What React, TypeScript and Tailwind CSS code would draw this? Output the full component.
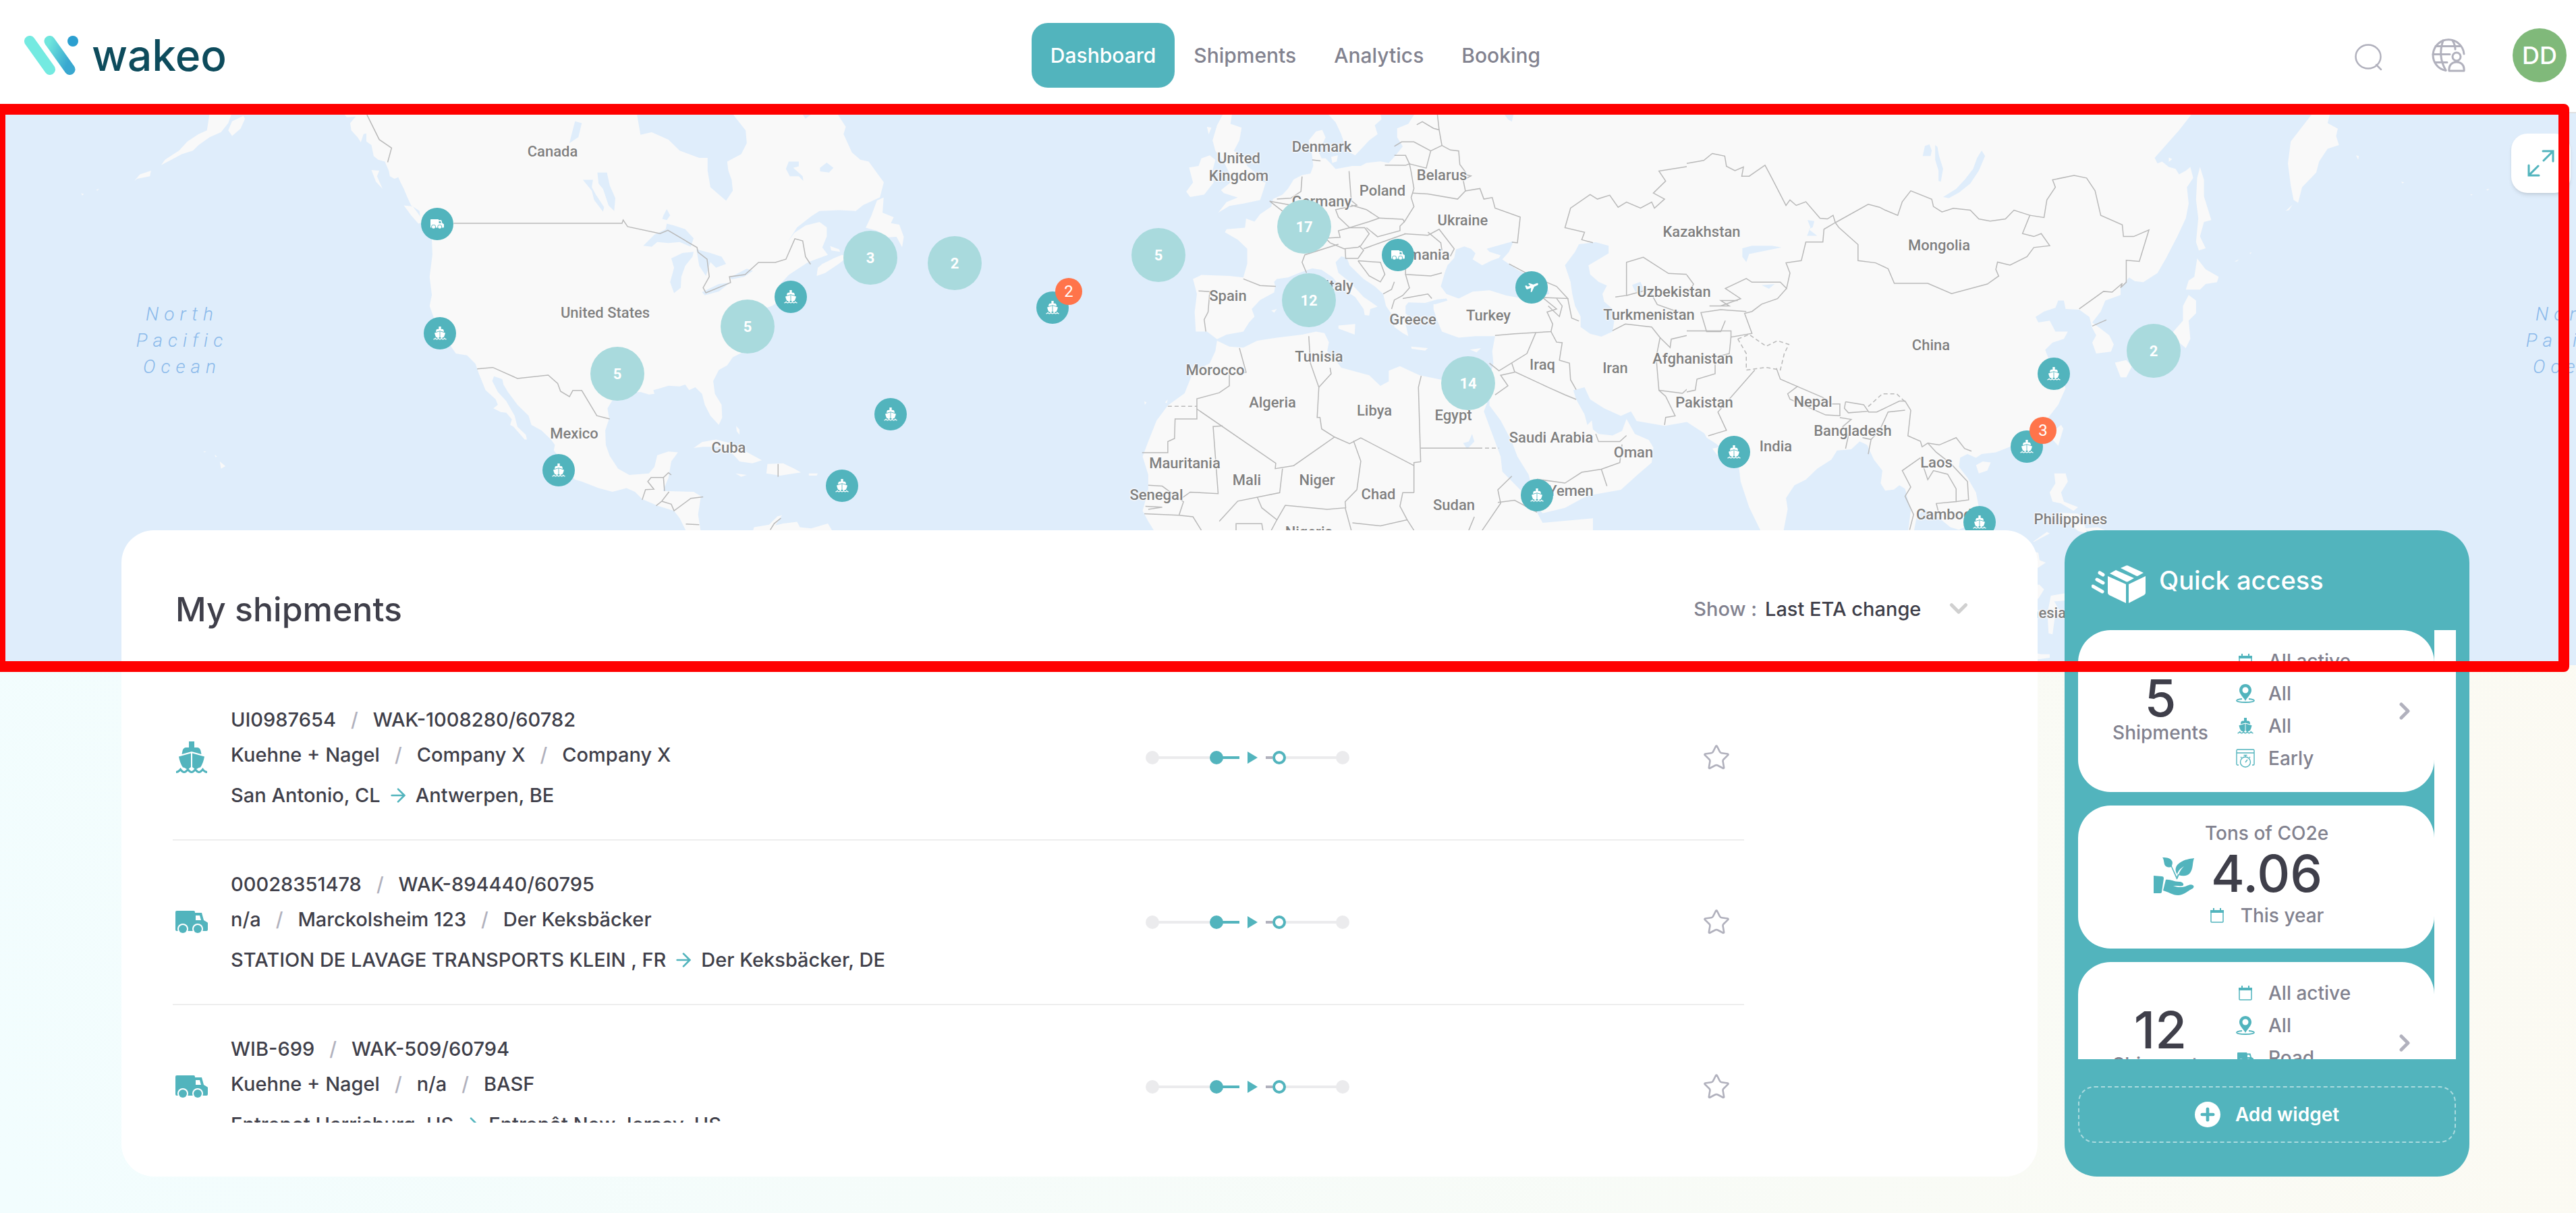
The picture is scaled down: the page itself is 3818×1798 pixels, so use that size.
import { ArrowRight, ChevronDown, ChevronRight, Plus, Star } from 'lucide-react';

type Mode = 'ship' | 'truck' | 'plane';

type Tile = {
  x: number;
  y: number;
  w: number;
  h: number;
  land: string[];
  water: string[];
  borders: string[];
  dashed: string[];
};

// World map outline, one entry per tile, points on a 1568 x 1568 grid
const tiles: Tile[] = [
  {
    x: 0,
    y: 150,
    w: 1300,
    h: 850,
    land: [
      '612,30 620,44 636,42 626,60 628,80 640,100 645,112 650,90 655,88 655,110 664,120 668,150 676,160 688,165 695,190 697,205 705,212 712,208 716,222 722,240 728,262 735,285 742,292 750,300 752,330 772,375 773,420 768,480 772,530 768,560 775,590 778,620 790,640 805,668 815,690 835,695 850,718 856,745 868,790 886,815 890,830 882,840 895,850 905,852 915,870 912,885 918,890 938,925 942,925 940,912 935,905 925,890 920,860 905,820 890,795 880,765 883,752 898,760 900,775 908,795 925,830 945,860 950,885 968,900 985,925 992,940 990,955 998,970 1010,1000 1028,1035 1040,1040 1070,1058 1095,1068 1120,1058 1135,1068 1148,1088 1175,1106 1205,1120 1215,1140 1228,1180 1253,1180 1248,1130 1253,1080 1240,1068 1185,1066 1195,1030 1200,985 1212,960 1195,958 1175,968 1170,1000 1160,1018 1125,1022 1105,1005 1090,970 1083,940 1082,900 1089,868 1086,840 1098,810 1120,798 1145,795 1160,802 1170,800 1168,790 1180,785 1195,778 1215,780 1225,775 1232,790 1243,782 1255,800 1260,830 1270,860 1285,885 1291,865 1290,830 1278,800 1275,765 1285,735 1300,722 1310,700 1330,685 1345,660 1340,620 1360,570 1380,560 1400,540 1395,500 1410,475 1425,460 1445,440 1480,420 1470,400 1478,370 1478,345 1465,330 1440,340 1420,360 1408,385 1425,345 1450,315 1465,300 1500,298 1530,300 1543,284 1573,263 1580,222 1560,180 1553,165 1538,160 1523,140 1508,90 1512,70 1495,30 1455,30 1440,48 1432,30 1308,30 1315,45 1333,80 1335,115 1325,145 1300,165 1302,190 1308,215 1310,245 1298,272 1285,255 1270,235 1265,190 1265,155 1250,155 1215,135 1195,105 1165,85 1145,92 1138,30',
      '722,285 738,288 748,308 757,330 748,335 735,312',
      '664,188 678,190 674,205 684,240 672,220',
      '375,30 415,30 408,60 395,85 375,98 355,120 345,135 325,145 300,165 288,175 295,160 320,135 335,110 355,90 370,80',
      '415,55 435,40 438,48 430,75 415,95 408,80',
      '240,218 250,200 270,190 268,205 245,212',
      '145,252 150,254 147,258',
      '172,242 177,240 174,245',
      '1240,948 1255,932 1280,925 1305,935 1330,955 1362,982 1345,990 1322,985 1310,965 1285,945 1258,945',
      '1372,992 1400,990 1420,1005 1432,1015 1410,1020 1395,1024 1370,1018',
      '1315,1018 1335,1022 1325,1027',
      '1446,1018 1462,1018 1460,1024 1446,1024',
      '1316,888 1322,898 1322,912 1317,902',
      '1345,1180 1348,1165 1375,1158 1390,1135 1398,1132 1386,1160 1400,1155 1425,1150 1430,1165 1450,1168 1480,1155 1490,1180',
      '393,985 403,998 395,1005',
      '384,966 388,972 385,973',
      '364,957 369,959 365,960',
      '1460,478 1462,455 1470,445 1490,430 1505,420 1515,426 1500,444 1475,470',
      '1484,396 1500,405 1502,412 1486,408',
    ],
    water: [
      '1150,395 1170,365 1190,350 1192,335 1205,340 1225,350 1240,375 1235,398 1215,385 1195,388 1175,385 1165,398',
      '1200,430 1220,415 1240,412 1238,425 1225,450 1218,480 1217,510 1205,525 1198,495 1205,455',
      '1245,405 1270,415 1290,425 1298,445 1280,455 1270,440 1262,478 1250,450',
      '1255,522 1285,500 1305,496 1285,520 1260,531',
      '1305,482 1335,458 1346,464 1330,480 1308,487',
      '1068,195 1085,195 1090,230 1100,265 1098,300 1088,285 1078,240 1070,225',
      '1042,215 1060,215 1058,235 1065,255 1080,290 1078,302 1062,270 1058,245',
      '1186,312 1192,295 1198,312 1192,325 1184,322',
      '1410,165 1428,165 1428,178 1418,182 1435,205 1436,218 1428,205 1412,205 1405,185',
      '1466,182 1478,168 1490,182 1482,195 1466,192',
      '1028,55 1040,60 1034,98 1018,115 1022,90',
    ],
    borders: [
      '656,37 678,105 700,128 693,167',
      '811,334 1112,334 1114,325 1122,343 1180,362 1194,353 1246,400 1248,413 1264,432 1268,480 1257,510 1262,524 1306,496 1304,480 1332,474 1356,441 1386,441 1405,432 1421,376 1435,382 1440,425 1449,446',
      '853,732 881,728 925,758 980,749 997,772 1002,793 1018,808 1024,791 1040,791 1067,860 1090,869',
      '1148,1090 1154,1062 1169,1061 1158,1040 1164,1029 1186,1029 1195,1016 1200,1022',
      '1186,1029 1188,1066',
      '1196,1068 1183,1094 1173,1106',
      '1183,1094 1200,1102 1205,1120 1235,1086 1257,1082',
      '1226,1156 1250,1158',
      '1391,992 1391,1027',
      '1396,1140 1384,1155 1377,1172',
    ],
    dashed: [],
  },
  {
    x: 1250,
    y: 150,
    w: 1300,
    h: 700,
    land: [
      '60,330 72,320 70,370 90,385 85,405 100,410 108,450 105,485 95,450 80,452 60,430 40,420 50,380',
      '678,45 695,40 692,75 712,88 708,130 698,165 715,185 722,215 735,235 740,262 755,270 750,300 745,328 715,340 690,348 670,370 685,335 705,320 680,305 675,295 692,270 690,240 680,200 665,165 660,130 668,80',
      '640,190 655,180 665,195 660,230 662,270 645,310 620,318 613,300 625,270 618,220 635,215',
      '650,85 658,88 653,110',
      '865,40 880,70 890,110 900,165 915,180 930,150 940,130 955,110 950,80 962,60 960,40',
      '872,185 884,180 882,200 874,205',
      '1022,40 1010,75 990,90 990,120 1000,150 985,185 975,205 960,200 935,205 925,215 910,215 880,225 870,205 862,190 855,190 850,170 862,120 856,95 845,100 832,130 838,180 840,215 835,240 820,245 805,260 795,290 785,310 768,325 765,350 745,375 735,400 720,390 718,420 685,425 682,435 705,460 722,490 722,540 715,585 690,580 640,577 625,590 632,640 628,700 630,765 650,765 668,790 685,775 715,765 725,735 735,715 730,690 745,660 770,635 772,615 770,600 775,590 795,585 815,570 838,555 855,560 875,585 890,620 915,650 930,690 932,710 940,712 942,690 955,682 930,650 915,620 905,600 885,570 880,535 890,515 900,520 905,545 930,590 950,615 965,640 970,680 985,720 985,750 1000,770 1010,780 1005,740 1015,720 1005,705 1005,680 1010,668 1040,670 1055,672 1055,690 1060,720 1070,765 1100,785 1130,780 1165,780 1160,830 1162,870 1155,920 1155,1010 1175,1060 1195,1130 1205,1180 1225,1240 1232,1290 1240,1345 1250,1368 1290,1350 1330,1310 1390,1290 1420,1240 1445,1200 1448,1150 1440,1125 1415,1105 1400,1055 1392,1095 1375,1110 1350,1105 1340,1090 1338,1060 1330,1075 1325,1040 1310,990 1305,960 1325,950 1335,990 1360,1020 1390,1045 1408,1030 1418,1062 1468,1078 1508,1065 1545,1110 1568,1150 1568,40',
      '668,795 690,815 715,818 740,795 775,785 820,775 845,765 860,770 868,800 865,830 880,860 890,885 940,910 960,945 975,930 975,895 995,880 1030,910 1070,925 1110,930 1158,925 1160,960 1150,1005 1145,1030 1165,1130 1175,1180 1178,1230 1210,1290 1240,1365 1250,1400 1340,1385 1340,1440 560,1440 545,1395 535,1360 545,1290 545,1240 535,1180 545,1130 560,1060 580,1010 610,970 625,900 655,870 665,830',
      '885,745 915,740 914,775 885,755',
      '1015,815 1045,820 1040,828 1016,822',
      '1120,825 1140,820 1132,834',
      '765,695 775,690 770,702',
      '538,996 542,1000 539,1008',
      '575,1000 580,990 578,1003',
    ],
    water: [
      '1078,640 1068,615 1075,570 1080,545 1092,520 1095,492 1110,482 1122,490 1130,505 1125,525 1142,545 1158,530 1172,520 1175,512 1155,500 1150,490 1172,478 1198,465 1190,500 1178,525 1205,560 1235,585 1258,610 1262,640 1240,650 1215,655 1185,645 1155,628 1125,632 1100,655',
      '1040,670 1062,658 1078,655 1080,662 1058,674',
      '1290,545 1308,500 1315,475 1345,468 1368,480 1368,505 1350,525 1332,545 1335,575 1350,600 1365,612 1357,640 1360,665 1375,690 1378,730 1375,765 1355,782 1335,772 1318,750 1318,715 1308,680 1303,640 1300,600',
      '1410,610 1425,600 1430,620 1425,645 1415,630',
      '1182,45 1198,45 1195,68 1188,60',
      '1108,1135 1118,1130 1124,1105 1128,1130 1115,1155',
    ],
    borders: [
      '715,590 745,612 773,615',
      '635,630 655,632 652,700 645,725 648,765',
      '785,365 762,332 800,345',
      '775,325 800,322 818,300 820,250',
      '838,195 853,198',
      '904,232 908,330 918,345 880,360 885,385 905,420 940,400 958,388 935,360 908,345',
      '958,388 1000,392 1003,400 1020,350 1015,320 1020,290 1015,235 1012,208 1005,213 968,212',
      '905,420 885,430 888,452 862,455 870,470 895,490 920,485 925,480 940,440 932,420 905,420',
      '885,475 825,510 820,535 828,570',
      '897,490 898,522 920,522 930,495 922,480',
      '935,420 955,450 995,430 995,415 1003,400',
      '930,490 960,470 1005,440',
      '985,180 1005,180 1012,208 1042,222 1050,165 1020,135 998,135 985,150',
      '1050,165 1070,147 1065,95 1055,90 1035,68 1025,78',
      '1062,45 1065,95',
      '1070,147 1085,162 1100,165 1102,210 1112,235 1105,240 1122,248 1108,262 1112,298 1098,325 1045,308 1018,305',
      '1112,298 1138,290 1145,325 1160,320 1165,355 1210,385 1205,470 1195,468',
      '1003,440 1045,445 1065,425 1092,490 1085,515',
      '1045,435 1068,470 1070,495',
      '1005,545 1005,575 1050,580 1070,570',
      '1005,575 1012,620 1000,645 985,660 980,690',
      '1000,655 1045,640 1052,655',
      '920,530 960,535 968,575 960,600 940,580 920,530',
      '985,600 980,625 965,640',
      '1165,778 1200,772 1265,765 1268,740 1258,700 1275,690 1250,652',
      '1238,768 1222,838 1172,895 1155,870',
      '1265,765 1275,800 1285,802 1280,860 1298,870 1300,925 1310,958',
      '1195,870 1200,898 1260,950 1290,975 1310,990',
      '1200,900 1175,910 1188,945 1165,975',
      '1240,1255 1290,1268 1320,1232 1355,1222 1388,1200 1392,1140',
      '1355,1222 1365,1278',
      '1345,1105 1350,1130 1388,1130 1400,1110',
      '1190,540 1230,580 1275,615 1295,655 1250,652',
      '1275,655 1285,680 1280,715 1260,680',
      '1295,655 1302,720 1315,730',
      '1375,762 1398,740 1445,750 1460,785 1453,850 1458,960 1470,980 1487,1045 1470,1050 1468,1075',
      '1458,960 1500,970 1530,920 1558,905 1558,865',
      '1340,470 1320,460 1325,435 1290,420 1300,355 1335,310 1348,325 1370,312 1385,352 1400,335 1425,355 1445,335 1450,355 1468,325 1448,305 1470,265 1458,232 1515,215 1520,195 1550,190 1555,172 1568,176',
      '1380,650 1400,645 1400,535 1430,518 1475,572 1510,575 1520,600 1545,625',
      '1400,645 1440,625 1455,675 1500,705 1525,760',
      '1460,785 1478,818 1480,790 1508,778 1530,762 1560,765',
      '708,820 720,900 690,905 690,945 672,968 632,988 632,1055 593,1055 592,1120 580,1130 580,1167 534,1167',
      '632,1022 773,1202 772,1220 805,1210 878,1115 855,1088 852,1050 847,1050 850,950 835,870 832,780',
      '850,950 872,905 870,885',
      '878,1115 905,1137 925,1118 1020,1210',
      '1020,1300 1020,1200 1032,1197 1028,950 1033,912',
      '1032,1152 1135,1152',
      '678,1078 661,1080 670,1303 620,1298 605,1318',
      '785,1220 780,1300 705,1328 672,1395',
      '912,1128 925,1195 918,1290 897,1330 898,1350 865,1355 790,1342 775,1390',
      '1020,1300 1000,1300 995,1345 1008,1390 960,1410 910,1400',
      '897,1350 908,1425',
      '1008,1390 1020,1425',
      '545,1275 570,1278 608,1330 600,1375',
      '538,1370 600,1375 625,1380 640,1425',
      '540,1345 570,1348 545,1355',
      '740,1315 748,1350 775,1390 765,1425',
      '702,1425 702,1403 748,1403 750,1425',
      '1195,1245 1170,1290 1175,1335 1142,1425',
      '1170,1332 1200,1325 1240,1365',
      '1128,1380 1118,1425',
    ],
    dashed: ['580,1013 632,1013', '1135,1152 1172,1152'],
  },
  {
    x: 2500,
    y: 150,
    w: 1318,
    h: 850,
    land: [
      '0,30 893,30 868,80 845,120 825,155 830,170 838,165 850,180 862,185 868,200 880,190 888,180 893,210 882,235 885,280 880,320 865,370 845,430 830,470 805,495 790,492 780,482 765,510 765,530 738,545 730,575 715,605 730,622 745,640 753,665 748,685 722,690 715,660 722,640 715,620 710,590 692,570 668,568 665,545 655,545 650,565 630,575 615,590 620,605 640,600 650,630 672,630 665,650 645,660 632,680 642,720 660,750 668,785 655,830 640,860 620,900 600,925 570,945 545,960 520,965 510,975 495,965 482,975 480,1000 495,1030 510,1070 515,1110 510,1150 480,1172 465,1165 445,1140 430,1125 418,1115 405,1140 400,1180 390,1180 395,1120 385,1060 375,1050 365,1062 350,1065 342,1045 345,1010 330,980 318,940 305,930 290,952 265,955 255,980 230,1005 210,1035 190,1050 175,1085 178,1115 170,1180 132,1180 110,1110 95,1040 92,1000 85,990 60,980 45,950 60,945 35,920 25,890 0,875',
      '905,180 912,215 912,260 925,325 912,330 905,370 915,402 903,408 898,385 902,320 898,270 900,210',
      '1105,30 1135,30 1130,60 1148,75 1145,95 1150,120 1130,130 1115,165 1110,195 1085,235 1078,278 1070,270 1065,230 1060,170 1065,110 1085,70',
      '1056,300 1068,283 1062,298',
      '900,430 915,460 938,480 935,495 915,500 905,515 880,515 885,490 895,480',
      '885,530 898,545 898,580 885,600 888,650 880,675 860,650 840,685 800,690 778,705 785,690 830,660 858,630 875,600 875,560',
      '755,715 775,708 785,725 775,755 765,755',
      '648,900 660,885 664,895 655,942 645,925',
      '510,995 522,985 536,988 530,1010 515,1018',
      '648,1018 668,1018 672,1040 660,1070 665,1095 690,1110 682,1120 660,1100 645,1095 640,1070 650,1045',
      '655,1125 690,1128 700,1150 706,1182 690,1175 670,1150',
      '611,1204 635,1178 640,1182 612,1205',
      '700,1168 725,1165 740,1175 715,1182',
      '600,1225 620,1235 622,1255 633,1262 620,1275 600,1300',
      '600,1320 622,1322 630,1335 620,1360 600,1370',
      '642,1352 670,1345 668,1365 648,1368 660,1400 650,1400 645,1458 638,1455 636,1400',
      '600,1505 625,1512 640,1512 640,1522 600,1530',
      '1180,148 1185,150 1184,160',
      '1260,220 1265,222 1262,225',
      '1382,254 1386,255 1383,258',
      '1410,241 1415,240 1412,245',
      '850,154 856,158 850,166',
      '992,415 996,413 994,418',
      '966,438 974,432 970,438',
    ],
    water: [
      '520,135 526,150 515,190 500,225 480,250 462,265 452,262 475,240 490,215 505,185 512,155',
      '420,122 428,118 432,135 430,150 416,150',
      '438,120 442,125 445,150 452,185 448,220 444,218 444,190 438,160',
      '98,402 115,395 150,395 167,400 135,410 110,418 105,440 98,425',
      '213,325 225,328 222,345 215,350 230,368 212,368 218,345',
      '132,503 155,500 145,513',
    ],
    borders: [
      '0,170 30,162 45,143 67,150 70,178 85,190 100,180 97,205 110,205 138,175 150,210 175,285 182,270 193,285 210,275 235,320 248,322 258,312 262,332',
      '262,332 320,282 340,290 350,298 372,312 380,275 395,245 432,268 435,288 450,303 470,293 500,298 515,322 535,328 562,322 577,298 605,312 592,362 612,370 625,362 640,395 612,400 600,425 570,448 548,440 545,460 550,478 530,500 467,526 425,498 366,498 355,458 333,442 302,436 302,392 268,345 262,332',
      '605,312 630,318 635,270 650,235 645,215 683,203 705,210 720,245 730,312 768,338 770,370 788,370 815,352 798,438 775,435 775,495 765,510 768,498 750,522 735,520 692,568',
      '715,615 740,598',
      '262,332 242,350 240,385 210,385 202,436 175,442 182,470 176,512 165,495 115,495 105,485 68,512 95,540 60,560',
      '176,512 160,540 132,555 115,575 102,580 115,635 78,645 78,628 0,628',
      '68,600 60,630 35,630 25,578 60,570 105,575',
      '40,560 75,560 60,545 90,545',
      '0,475 12,500 5,520',
      '120,735 55,850 70,900 38,915',
      '78,645 75,690 50,700 50,745 18,760 15,790 0,795',
      '158,730 165,760 195,780 178,800 182,815 245,858 270,860 270,828 255,828',
      '195,780 240,810 255,828',
      '280,822 312,830 320,848 285,852 278,840 280,822',
      '320,850 335,850 375,820 385,820 395,845 390,915 412,930 415,945 425,935 445,940 475,920 490,950 502,957',
      '270,865 290,870 275,890 285,915 280,950',
      '310,920 325,925 320,965',
      '385,845 355,850 340,900 325,925',
      '412,975 380,1010 395,1055 385,1080 400,1130 393,1172',
      '412,975 425,1035 435,1010 460,1020 475,1060 475,1095 440,1100 445,1130',
      '425,935 440,960 465,990 495,1040 497,1090 475,1095',
    ],
    dashed: [
      '90,650 110,638 140,670 160,655 180,665 172,690 165,735 140,728 105,735 105,690 90,650',
      '320,835 345,800 370,800 385,822',
    ],
  },
];

const labels: { text: string; x: number; y: number }[] = [
  { text: 'Canada', x: 819, y: 225 },
  { text: 'United States', x: 897, y: 464 },
  { text: 'Mexico', x: 851, y: 643 },
  { text: 'Cuba', x: 1080, y: 664 },
  { text: 'Denmark', x: 1959, y: 218 },
  { text: 'United\nKingdom', x: 1836, y: 248 },
  { text: 'Belarus', x: 2137, y: 260 },
  { text: 'Poland', x: 2049, y: 283 },
  { text: 'Germany', x: 1959, y: 299 },
  { text: 'Ukraine', x: 2168, y: 327 },
  { text: 'Romania', x: 2105, y: 378 },
  { text: 'Italy', x: 1985, y: 424 },
  { text: 'Spain', x: 1820, y: 439 },
  { text: 'Greece', x: 2094, y: 474 },
  { text: 'Turkey', x: 2206, y: 468 },
  { text: 'Tunisia', x: 1955, y: 529 },
  { text: 'Morocco', x: 1801, y: 549 },
  { text: 'Algeria', x: 1886, y: 597 },
  { text: 'Libya', x: 2037, y: 609 },
  { text: 'Egypt', x: 2154, y: 616 },
  { text: 'Iraq', x: 2286, y: 541 },
  { text: 'Iran', x: 2394, y: 546 },
  { text: 'Saudi Arabia', x: 2299, y: 649 },
  { text: 'Oman', x: 2421, y: 671 },
  { text: 'Mauritania', x: 1756, y: 687 },
  { text: 'Mali', x: 1848, y: 712 },
  { text: 'Niger', x: 1952, y: 712 },
  { text: 'Senegal', x: 1714, y: 734 },
  { text: 'Chad', x: 2043, y: 733 },
  { text: 'Sudan', x: 2155, y: 749 },
  { text: 'Yemen', x: 2328, y: 728 },
  { text: 'Nigeria', x: 1940, y: 789 },
  { text: 'Kazakhstan', x: 2522, y: 344 },
  { text: 'Uzbekistan', x: 2481, y: 433 },
  { text: 'Turkmenistan', x: 2444, y: 467 },
  { text: 'Afghanistan', x: 2509, y: 532 },
  { text: 'Pakistan', x: 2526, y: 597 },
  { text: 'China', x: 2862, y: 512 },
  { text: 'Mongolia', x: 2874, y: 364 },
  { text: 'Nepal', x: 2687, y: 596 },
  { text: 'Bangladesh', x: 2746, y: 639 },
  { text: 'India', x: 2632, y: 662 },
  { text: 'Laos', x: 2870, y: 686 },
  { text: 'Cambodia', x: 2890, y: 763 },
  { text: 'Philippines', x: 3069, y: 770 },
  { text: 'Indonesia', x: 3014, y: 909 },
];

const clusters = [
  { count: 5, x: 915, y: 554 },
  { count: 5, x: 1108, y: 484 },
  { count: 3, x: 1290, y: 382 },
  { count: 2, x: 1415, y: 390 },
  { count: 5, x: 1717, y: 378 },
  { count: 17, x: 1933, y: 336 },
  { count: 12, x: 1940, y: 445 },
  { count: 14, x: 2176, y: 568 },
  { count: 2, x: 3192, y: 520 },
];

const pins: { mode: Mode; x: number; y: number; badge?: number }[] = [
  { mode: 'truck', x: 648, y: 332 },
  { mode: 'ship', x: 652, y: 494 },
  { mode: 'ship', x: 828, y: 697 },
  { mode: 'ship', x: 1172, y: 440 },
  { mode: 'ship', x: 1248, y: 720 },
  { mode: 'ship', x: 1320, y: 614 },
  { mode: 'ship', x: 1560, y: 456, badge: 2 },
  { mode: 'truck', x: 2072, y: 378 },
  { mode: 'plane', x: 2270, y: 426 },
  { mode: 'ship', x: 2278, y: 734 },
  { mode: 'ship', x: 2570, y: 670 },
  { mode: 'ship', x: 3044, y: 554 },
  { mode: 'ship', x: 3004, y: 662, badge: 3 },
  { mode: 'ship', x: 2934, y: 774 },
];

const shipments: { id: number; mode: Mode; refs: string[]; parties: string[]; from: string; to: string }[] = [
  {
    id: 1,
    mode: 'ship',
    refs: ['UI0987654', 'WAK-1008280/60782'],
    parties: ['Kuehne + Nagel', 'Company X', 'Company X'],
    from: 'San Antonio, CL',
    to: 'Antwerpen, BE',
  },
  {
    id: 2,
    mode: 'truck',
    refs: ['00028351478', 'WAK-894440/60795'],
    parties: ['n/a', 'Marckolsheim 123', 'Der Keksbäcker'],
    from: 'STATION DE LAVAGE TRANSPORTS KLEIN , FR',
    to: 'Der Keksbäcker, DE',
  },
  {
    id: 3,
    mode: 'truck',
    refs: ['WIB-699', 'WAK-509/60794'],
    parties: ['Kuehne + Nagel', 'n/a', 'BASF'],
    from: 'Entrepot Harrisburg, US',
    to: 'Entrepôt New Jersey, US',
  },
];

// Map coordinates are given on a 3818px wide page, with the map starting at 168px
const place = (x: number, y: number) => ({ left: `${(x / 3818) * 100}%`, top: `${y - 168}px` });

function ShipIcon({ className }: { className: string }) {
  return (
    <svg viewBox="0 0 48 48" className={className} fill="currentColor">
      <path d="M20 0h8v9h4c3 0 5 2 5.500 5l1 5L24 15 9.500 19l1-5C11 11 13 9 16 9h4z" />
      <path d="M5 22.500 23 17.500V38c-2 1-3 3-5 3-3 0-4-3-7-2.500C8 34 6 28 5 22.500z" />
      <path d="M43 22.500 25 17.500V38c2 1 3 3 5 3 3 0 4-3 7-2.500 3-4.500 5-10.500 6-16z" />
      <path
        d="M1 45.500c3 0 4-1 6.500-4 3 4 4 4 5.500 4s3-1 5.500-4c3 4 4 4 5.500 4s3-1 5.500-4c3 4 4 4 5.500 4s3-1 5.500-4c2 3 4 4 6.500 4"
        fill="none"
        stroke="currentColor"
        strokeWidth="3"
      />
    </svg>
  );
}

function TruckIcon({ className, hole }: { className: string; hole: string }) {
  return (
    <svg viewBox="0 0 48 34" className={className} fill="currentColor">
      <path d="M2 0h25a2 2 0 0 1 2 2v1h10l3 11 5 3a2 2 0 0 1 1 2v9a2 2 0 0 1-2 2H2a2 2 0 0 1-2-2V2a2 2 0 0 1 2-2z" />
      <path d="M30 7h6l2 7h-8z" className={hole} />
      <circle cx="11" cy="27" r="8" className={hole} />
      <circle cx="33" cy="27" r="8" className={hole} />
      <circle cx="11" cy="27" r="6" />
      <circle cx="33" cy="27" r="6" />
    </svg>
  );
}

function PlaneIcon({ className }: { className: string }) {
  return (
    <svg viewBox="0 0 60 44" className={className} fill="currentColor">
      <path d="M1 14l5-2 8 5 10-4L15 5l5-3 18 6 14-5c5-2 9 1 7 5-1 2-3 4-6 5l-11 5-10 22-6 3 2-20-16 6c-3 1-5 0-6-2z" />
    </svg>
  );
}

function CalendarIcon() {
  return (
    <svg viewBox="0 0 22 24" className="h-6 w-[22px] text-[#52b4bd]" fill="currentColor">
      <path d="M1 4h4V1h2v3h8V1h2v3h4v4H1z" />
      <rect x="2" y="5" width="18" height="17" rx="1" fill="none" stroke="currentColor" strokeWidth="1.500" />
    </svg>
  );
}

function LocationIcon() {
  return (
    <svg viewBox="0 0 28 28" className="size-7 text-[#52b4bd]" fill="currentColor">
      <path fillRule="evenodd" d="M14 0c5 0 9 4 9 9 0 6-6 10-9 16C11 19 5 15 5 9c0-5 4-9 9-9zm0 4.500a4.500 4.500 0 1 0 0 9 4.500 4.500 0 0 0 0-9z" />
      <path
        d="M9 22c-5 .5-8 1-8 2.500S7 27 14 27s13-1 13-2.500-3-2-8-2.500"
        fill="none"
        stroke="currentColor"
        strokeWidth="1.800"
      />
    </svg>
  );
}

function EarlyIcon() {
  return (
    <svg viewBox="0 0 28 28" className="size-7 text-[#52b4bd]" fill="none" stroke="currentColor" strokeWidth="1.400">
      <path d="M4 24H2.500A1.500 1.500 0 0 1 1 22.500v-20A1.500 1.500 0 0 1 2.500 1h23A1.500 1.500 0 0 1 27 2.500v20a1.500 1.500 0 0 1-1.500 1.500H24M1 6h26" />
      <circle cx="14" cy="19.500" r="7.500" />
      <path d="M14 20l3-4M14 12v-2.500M11.500 9.500h5M7 12l1.500 1.500M21 12l-1.500 1.500" />
    </svg>
  );
}

function LeafHandIcon() {
  return (
    <svg viewBox="0 0 60 60" className="size-[60px] text-[#52b4bd]" fill="currentColor">
      <path d="M0 30l12 1c2 0 3 1 3 3l-3 20c0 1-1 2-2 2H0z" />
      <path d="M18 36c6-1 12 3 20 3 5 0 8 4 5 6-3 1-8 0-14 0 5 2 12 3 18 1 4-2 8-4 11-2 3 2 1 5-2 6-6 3-12 9-20 9-8 0-14-5-22-7z" />
      <path d="M13 3c7 0 12 1 14 5 2 3 0 6 0 8l8 17h-2l-7-16c-3 1-8 1-10-4-1-4-1-8-3-10z" />
      <path d="M60 4c-3 8-1 15-6 22-4 5-11 5-17 3 1-5 4-9 8-13-5 3-9 7-10 12-5-7-2-14 5-18 6-4 13-5 20-6z" />
      <path d="M37 28l-3 7" stroke="currentColor" strokeWidth="2" />
    </svg>
  );
}

function BoxIcon() {
  return (
    <svg viewBox="0 0 80 56" className="h-14 w-20 text-white" fill="currentColor">
      <path d="M24 16l27 12v28L26 44c-1-1-2-2-2-4z" />
      <path d="M80 16L55 28v28l23-12c1-1 2-2 2-4z" />
      <path d="M27 12l9-5 27 12-9 5c-1 .5-2 .5-3 0z" />
      <path d="M43 4l8-3.500c1-.5 2-.5 3 0L77 11l-8 4.500c-1 .5-2 .5-3 0z" />
      <path d="M12 11l5 3M8 21l9 5M2 31l14 8" stroke="currentColor" strokeWidth="5" strokeLinecap="round" />
    </svg>
  );
}

function Logo() {
  return (
    <svg viewBox="0 0 80 58" className="h-[58px] w-20">
      <defs>
        <linearGradient id="bar" x1="0" y1="0" x2="1" y2="0.6">
          <stop offset="0" stopColor="#6fe6dd" />
          <stop offset="1" stopColor="#39a8d0" />
        </linearGradient>
      </defs>
      <path d="M8 8l30 42" stroke="#74eae1" strokeWidth="16" strokeLinecap="round" />
      <path d="M37.500 8l30 42" stroke="url(#bar)" strokeWidth="16" strokeLinecap="round" />
      <circle cx="72" cy="8" r="8" fill="#2b9fd0" />
    </svg>
  );
}

function GlobeUserIcon() {
  return (
    <svg viewBox="0 0 50 50" className="size-[50px] text-[#b1b1bd]" fill="none" stroke="currentColor" strokeWidth="3" strokeLinecap="round">
      <path d="M48 23A23 23 0 1 0 21 47.500" />
      <path d="M17 3C12 18 13 34 21 47M31 3c3 5 4 9 4 13M6 11.500h36M2 23.500h25M5 35.500h18" />
      <circle cx="37" cy="27" r="6" />
      <path d="M26 48c-1-8 4-13 11-13s12 5 11 13z" strokeLinejoin="round" />
    </svg>
  );
}

function ModeIcon({ mode, className, hole }: { mode: Mode; className: string; hole: string }) {
  if (mode === 'ship') return <ShipIcon className={className} />;
  if (mode === 'truck') return <TruckIcon className={className} hole={hole} />;
  return <PlaneIcon className={className} />;
}

function Header() {
  return (
    <header className="grid h-[168px] grid-cols-[1fr_auto_1fr] items-center border-b-2 border-[#e0e0e0] bg-white pr-[14px] pb-0.5 pl-9">
      <a href="#" className="flex items-center gap-5 text-[64px] font-medium text-[#0d4b5c]">
        <Logo />
        wakeo
      </a>
      <nav className="flex text-[30px] font-medium text-[#82828f]">
        <a href="#" className="flex h-24 items-center rounded-3xl bg-[#52b4bd] px-7 text-white">Dashboard</a>
        <a href="#" className="flex h-24 items-center px-7">Shipments</a>
        <a href="#" className="flex h-24 items-center px-7">Analytics</a>
        <a href="#" className="flex h-24 items-center px-7">Booking</a>
      </nav>
      <div className="flex items-center justify-end gap-[70px]">
        <button type="button" aria-label="Search">
          <svg viewBox="0 0 48 48" className="size-12 text-[#b1b1bd]" fill="none" stroke="currentColor" strokeWidth="2.500" strokeLinecap="round">
            <ellipse cx="24" cy="26" rx="18.500" ry="17.500" />
            <path d="M36 38l7 7" />
          </svg>
        </button>
        <button type="button" aria-label="Language">
          <GlobeUserIcon />
        </button>
        <button type="button" className="size-20 rounded-full bg-[#80b97a] text-4xl font-medium text-white">DD</button>
      </div>
    </header>
  );
}

function WorldMap() {
  return (
    <section className="relative h-[818px] overflow-hidden bg-[#dfedfb] font-['Roboto',sans-serif]">
      <svg viewBox="0 168 3818 818" preserveAspectRatio="none" className="absolute inset-0 size-full">
        {tiles.map((tile) => (
          <svg
            key={tile.x}
            x={tile.x}
            y={tile.y}
            width={tile.w}
            height={tile.h}
            viewBox="0 0 1568 1568"
            preserveAspectRatio="none"
            className="overflow-visible"
          >
            {tile.land.map((points) => (
              <polygon key={points} points={points} fill="#f9f9f9" />
            ))}
            {tile.water.map((points) => (
              <polygon key={points} points={points} fill="#dfedfb" />
            ))}
            {tile.borders.map((points) => (
              <polyline key={points} points={points} fill="none" stroke="#b9b9b9" strokeWidth="1.500" vectorEffect="non-scaling-stroke" />
            ))}
            {tile.dashed.map((points) => (
              <polyline key={points} points={points} fill="none" stroke="#b9b9b9" strokeWidth="1.500" strokeDasharray="6 4" vectorEffect="non-scaling-stroke" />
            ))}
          </svg>
        ))}
      </svg>

      {[270, 3812].map((x) => (
        <p
          key={x}
          className="absolute -translate-x-1/2 -translate-y-1/2 text-center text-[28px] leading-[39px] font-light tracking-[8px] text-[#8ab9ea] italic"
          style={place(x, 504)}
        >
          North
          <br />
          Pacific
          <br />
          Ocean
        </p>
      ))}

      {labels.map((label) => (
        <span
          key={label.text}
          className="absolute -translate-x-1/2 -translate-y-1/2 text-center text-[22px] leading-[26px] font-medium whitespace-pre text-[#808080] [text-shadow:0_0_2px_#fff,0_0_2px_#fff,0_0_3px_#fff,0_0_3px_#fff]"
          style={place(label.x, label.y)}
        >
          {label.text}
        </span>
      ))}

      {clusters.map((cluster) => (
        <button
          type="button"
          key={cluster.x}
          className="absolute size-20 -translate-x-1/2 -translate-y-1/2 rounded-full bg-[#a9dadd] text-[22px] font-bold text-white"
          style={place(cluster.x, cluster.y)}
        >
          {cluster.count}
        </button>
      ))}

      {pins.map((pin) => (
        <button
          type="button"
          key={pin.x}
          aria-label={pin.mode}
          className="absolute flex size-12 -translate-x-1/2 -translate-y-1/2 items-center justify-center rounded-full bg-[#52b4bd] text-white"
          style={place(pin.x, pin.y)}
        >
          <ModeIcon mode={pin.mode} className="w-5" hole="fill-[#52b4bd]" />
          {pin.badge && (
            <span className="absolute -top-5 -right-5 flex size-10 items-center justify-center rounded-full bg-[#ff744a] text-2xl">
              {pin.badge}
            </span>
          )}
        </button>
      ))}

      <button
        type="button"
        aria-label="Expand map"
        className="absolute top-[30px] right-2 flex size-[88px] items-center justify-center rounded-3xl bg-white text-[#52b4bd] shadow-md"
      >
        <svg viewBox="0 0 40 40" className="size-10" fill="none" stroke="currentColor" strokeWidth="3" strokeLinecap="round">
          <path d="M24 16L38 2M23 2h15v15M16 24L2 38M2 23v15h15" />
        </svg>
      </button>
    </section>
  );
}

function Progress() {
  return (
    <svg viewBox="0 0 302 20" className="h-5 w-[302px]">
      <path d="M10 10h95M198 10h94" stroke="#ebebed" strokeWidth="4" />
      <circle cx="10" cy="10" r="10" fill="#ebebed" />
      <path d="M105 10h34" stroke="#52b4bd" strokeWidth="4" />
      <circle cx="105" cy="10" r="10" fill="#52b4bd" />
      <path d="M151 1l15 9-15 9z" fill="#52b4bd" />
      <path d="M178 10h10" stroke="#b1b1bd" strokeWidth="4" />
      <circle cx="198" cy="10" r="8" fill="#fff" stroke="#52b4bd" strokeWidth="4" />
      <circle cx="292" cy="10" r="10" fill="#ebebed" />
    </svg>
  );
}

function Slashed({ items }: { items: string[] }) {
  return (
    <p className="flex h-[52px] items-center">
      {items.map((item, i) => (
        <span key={i} className="flex">
          {i > 0 && <span className="mx-[22px] text-[#b1b1bd]">/</span>}
          {item}
        </span>
      ))}
    </p>
  );
}

function Shipments() {
  return (
    <section className="flex-1 rounded-[48px] bg-white pb-20 pl-[76px]">
      <div className="flex h-[216px] items-center justify-between pt-[18px] pr-[104px] pl-1">
        <h2 className="text-[50px] font-medium text-[#3f3f4a]">My shipments</h2>
        <div className="flex items-center gap-3 text-[29px] font-medium">
          <label htmlFor="sort" className="text-[#82828f]">Show :</label>
          <div className="relative">
            <select id="sort" className="w-[300px] appearance-none bg-transparent text-[#3f3f4a]">
              <option>Last ETA change</option>
            </select>
            <ChevronDown size={42} strokeWidth={3} className="pointer-events-none absolute top-0 -right-2 text-[#d0d0d0]" />
          </div>
        </div>
      </div>
      <ul className="h-[662px] overflow-hidden">
        {shipments.map((shipment) => (
          <li key={shipment.id} className="mr-[435px] flex h-[244px] items-center border-b-2 border-[#eeeeee] text-[29px] font-medium text-[#3f3f4a]">
            <div className="ml-1 w-12 text-[#52b4bd]">
              <ModeIcon mode={shipment.mode} className="w-12" hole="fill-white" />
            </div>
            <div className="ml-[34px] w-[1356px]">
              <Slashed items={shipment.refs} />
              <Slashed items={shipment.parties} />
              <p className="mt-2 flex h-[52px] items-center">
                {shipment.from}
                <ArrowRight size={32} strokeWidth={2} className="mx-[10px] text-[#52b4bd]" />
                {shipment.to}
              </p>
            </div>
            <Progress />
            <button type="button" aria-label="Add to favourites" className="mr-5 ml-auto">
              <Star size={42} strokeWidth={1.5} className="text-[#b1b1bd]" />
            </button>
          </li>
        ))}
      </ul>
    </section>
  );
}

function ShipmentWidget({ count, mode, modeLabel }: { count: number; mode: Mode; modeLabel: string }) {
  return (
    <article className="flex h-60 shrink-0 items-center rounded-[48px] bg-white pr-6 pl-10">
      <div className="w-[164px] pb-2 text-center">
        <p className="text-[76px] leading-[72px] font-medium text-[#3f3f4a]">{count}</p>
        <p className="leading-8">Shipments</p>
      </div>
      <ul className="ml-[22px] pb-1">
        <li className="flex h-12 items-center gap-3"><span className="flex w-11 justify-center"><CalendarIcon /></span>All active</li>
        <li className="flex h-12 items-center gap-3"><span className="flex w-11 justify-center"><LocationIcon /></span>All</li>
        <li className="flex h-12 items-center gap-3">
          <span className="flex w-11 justify-center text-[#52b4bd]"><ModeIcon mode={mode} className="w-6" hole="fill-white" /></span>
          {modeLabel}
        </li>
        <li className="flex h-12 items-center gap-3"><span className="flex w-11 justify-center"><EarlyIcon /></span>Early</li>
      </ul>
      <button type="button" aria-label="Open" className="ml-auto">
        <ChevronRight size={40} strokeWidth={3} className="text-[#b1b1bd]" />
      </button>
    </article>
  );
}

function QuickAccess() {
  return (
    <aside className="w-[600px] rounded-[48px] bg-[#52b4bd] px-5 pb-[50px]">
      <div className="flex h-[148px] items-end gap-5 pb-10 pl-5">
        <BoxIcon />
        <h2 className="text-[38px] leading-[68px] font-medium text-white">Quick access</h2>
      </div>
      <div className="flex h-[636px] overflow-hidden text-[28px] font-medium text-[#82828f]">
        <div className="flex flex-1 flex-col gap-5">
          <ShipmentWidget count={5} mode="ship" modeLabel="All" />
          <article className="flex h-[212px] shrink-0 items-center gap-4 rounded-[48px] bg-white pb-1 pl-[112px]">
            <LeafHandIcon />
            <div className="flex flex-col items-center">
              <p className="leading-[34px]">Tons of CO2e</p>
              <p className="text-[76px] leading-[84px] font-medium text-[#3f3f4a]">4.06</p>
              <p className="flex items-center gap-6 leading-[42px]"><CalendarIcon />This year</p>
            </div>
          </article>
          <ShipmentWidget count={12} mode="truck" modeLabel="Road" />
        </div>
        <div className="w-8 bg-white" />
      </div>
      <button
        type="button"
        className="mt-10 flex h-[84px] w-full items-center justify-center gap-[22px] rounded-3xl border-2 border-dashed border-white/50 text-[28px] font-semibold text-white"
      >
        <span className="flex size-[38px] items-center justify-center rounded-full bg-white text-[#52b4bd]">
          <Plus size={28} strokeWidth={4} />
        </span>
        Add widget
      </button>
    </aside>
  );
}

export default function App() {
  return (
    <div className="relative min-h-screen overflow-hidden bg-[linear-gradient(80deg,#f2fdfe,#fcfaf2)] font-['Inter',sans-serif]">
      <Header />
      <WorldMap />
      <main className="relative -mt-[200px] flex gap-10 pr-[158px] pb-[54px] pl-[180px]">
        <Shipments />
        <QuickAccess />
      </main>
      {/* highlight around the map */}
      <div className="pointer-events-none absolute top-[154px] right-[10px] -left-2 h-[842px] rounded-lg border-[16px] border-[#ff0000]" />
    </div>
  );
}
